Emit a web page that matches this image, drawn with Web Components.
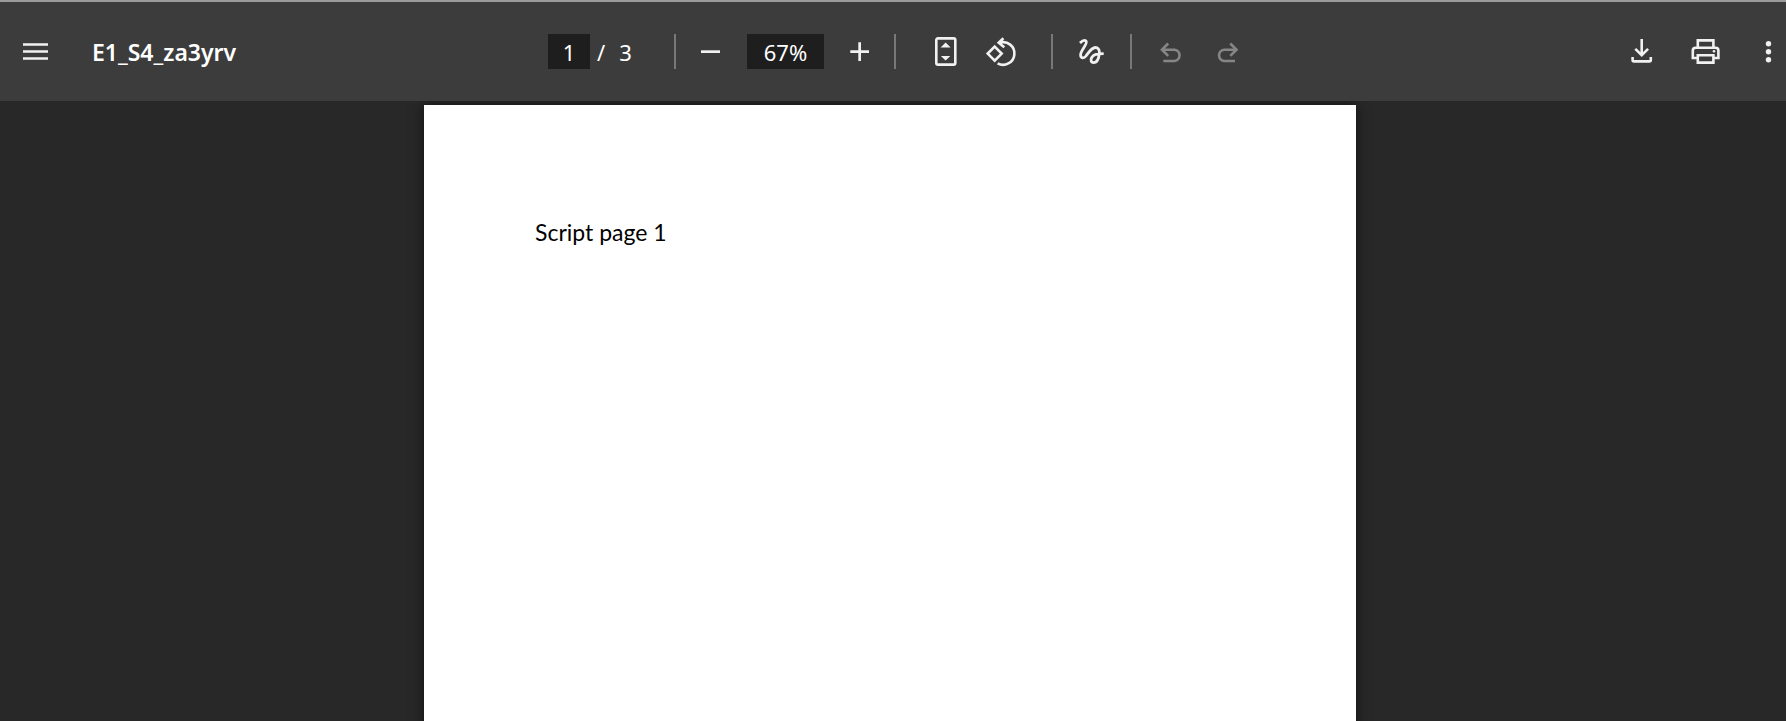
<!DOCTYPE html>
<html lang="en">
<head>
<meta charset="utf-8">
<title>E1_S4_za3yrv</title>
<style>
  html, body { height: 100%; margin: 0; overflow: hidden; background: #282828; }
  body { font-family: "Noto Sans", "Open Sans", sans-serif; }
</style>
</head>
<body>
<pdf-viewer>
  <pdf-toolbar slot="toolbar" doc-title="E1_S4_za3yrv" page="1" pages="3" zoom="67%"></pdf-toolbar>
  <pdf-page>Script page 1</pdf-page>
</pdf-viewer>

<script>
const ICONS = {
  menu: '<path class="solid" d="M3 9.300h25v2.400H3zM3 16.300h25v2.400H3zM3 23.300h25v2.400H3z"/>',
  minus: '<path class="solid" d="M6 16.300h19v2.700H6z"/>',
  plus: '<path class="solid" d="M6.300 16.300h18.700v2.700H6.300zM14.300 8.300h2.700v18.700h-2.700z"/>',
  fit: '<rect x="6.3" y="4.4" width="19" height="26.2" rx="1.6"/><path class="solid" d="M15.6 8.6l5 5h-10zM15.6 26.6l-4.7-4.7h9.4z"/>',
  rotate: '<path d="M9.7 12.6l7 7-7 7-7-7zM12.6 29.3A11.3 11.3 0 1 0 14.6 8.7M18.4 4.2l-4.7 4.5 5.6 4.6"/>',
  draw: '<path stroke-width="2.8" d="M4 9C6 7 8.5 5.6 10 7C12.500 9.500 4.500 16 4.600 21C4.700 24.500 8 24.600 10 22C13 18 15.500 13.500 19.500 13.500C22.500 13.500 23.800 16.500 23.300 20C22.700 24.500 21 28.600 17.600 28.600C14.800 28.600 14.600 25.600 15.600 23.600C17.500 20 21 19.700 27.700 19.700"/>',
  undo: '<path d="M8.300 27h11.300a5.700 5.700 0 0 0 0-11.300H7.500M13.200 9.500L7 15.700l6.200 6.200"/>',
  redo: '<path d="M24 27H13a5.700 5.700 0 0 1 0-11.300h12M19.300 9.500l6.200 6.200-6.200 6.200"/>',
  download: '<path d="M15.700 5v16.500M9.300 14.800l6.400 6.400 6.400-6.400M6.600 23v3q0 1.400 1.400 1.400h15.400q1.400 0 1.400-1.400v-3"/>',
  print: '<path d="M8.800 13.500V6.400h15.600v7.100M8.800 24H3.800V16.500q0-2.800 2.800-2.800h20q2.800 0 2.800 2.800V24h-5M8.800 21.300h15.600v7.300H8.800z"/><circle class="solid" cx="25" cy="17.200" r="1.300"/>',
  more: '<g class="solid"><circle cx="16.500" cy="9.700" r="2.700"/><circle cx="16.500" cy="17.700" r="2.700"/><circle cx="16.500" cy="25.700" r="2.700"/></g>'
};

class IconButton extends HTMLElement {
  connectedCallback() {
    const root = this.attachShadow({ mode: 'open' });
    root.innerHTML = `
      <style>
        :host { display: block; flex: none; }
        button { display: block; margin: 0; padding: 0; border: 0; background: none; color: #f1f1f1; cursor: pointer; }
        button:disabled { color: #868686; cursor: default; }
        svg { display: block; width: 32px; height: 35px; fill: none; stroke: currentColor; stroke-width: 2.6; }
        .solid { fill: currentColor; stroke: none; }
      </style>
      <button type="button" aria-label="${this.getAttribute('label')}" ${this.hasAttribute('disabled') ? 'disabled' : ''}>
        <svg viewBox="0 0 32 35" aria-hidden="true">${ICONS[this.getAttribute('icon')]}</svg>
      </button>`;
  }
}
customElements.define('icon-button', IconButton);

class ToolbarField extends HTMLElement {
  connectedCallback() {
    const root = this.attachShadow({ mode: 'open' });
    root.innerHTML = `
      <style>
        :host { display: block; flex: none; }
        input {
          display: block; box-sizing: border-box; width: 100%; height: 35px; margin: 0; padding: 0;
          border: 0; background: #1e1e1e; color: #fff; font: inherit; text-align: center; outline: none;
        }
      </style>
      <input type="text" aria-label="${this.getAttribute('label')}" value="${this.getAttribute('value')}">`;
  }
}
customElements.define('toolbar-field', ToolbarField);

class PdfToolbar extends HTMLElement {
  connectedCallback() {
    const attr = name => this.getAttribute(name);
    const root = this.attachShadow({ mode: 'open' });
    root.innerHTML = `
      <style>
        :host {
          display: grid; grid-template-columns: 1fr auto 1fr; align-items: center;
          box-sizing: border-box; height: 101px; padding: 0 2px 0 20px;
          border-top: 2px solid #9b9b9b; background: #3c3c3c; color: #fff;
          font-size: 22px; line-height: 32px;
        }
        div { display: flex; align-items: center; }
        .start { gap: 40px; }
        h1 { margin: 0; font-size: 23px; line-height: 32px; font-weight: 600; white-space: nowrap; }
        .center { margin-right: 13px; }
        .pages { width: 126px; }
        .pages toolbar-field { width: 42px; }
        .pages span { padding-left: 7px; }
        .pages span + span { padding-left: 14px; }
        .zoom { gap: 20px; padding: 0 18px 0 19px; }
        .zoom toolbar-field { width: 77px; }
        .view { gap: 23px; padding: 0 34px; }
        .annotate { padding: 0 22px 0 23px; }
        .history { gap: 24px; padding-left: 23px; }
        .end { justify-content: flex-end; gap: 31px; }
        i { width: 2px; height: 35px; background: #787878; }
      </style>
      <div class="start">
        <icon-button icon="menu" label="Menu"></icon-button>
        <h1>${attr('doc-title')}</h1>
      </div>
      <div class="center">
        <div class="pages">
          <toolbar-field label="Page number" value="${attr('page')}"></toolbar-field>
          <span>/</span><span>${attr('pages')}</span>
        </div>
        <i></i>
        <div class="zoom">
          <icon-button icon="minus" label="Zoom out"></icon-button>
          <toolbar-field label="Zoom level" value="${attr('zoom')}"></toolbar-field>
          <icon-button icon="plus" label="Zoom in"></icon-button>
        </div>
        <i></i>
        <div class="view">
          <icon-button icon="fit" label="Fit to page"></icon-button>
          <icon-button icon="rotate" label="Rotate counterclockwise"></icon-button>
        </div>
        <i></i>
        <div class="annotate"><icon-button icon="draw" label="Draw"></icon-button></div>
        <i></i>
        <div class="history">
          <icon-button icon="undo" label="Undo" disabled></icon-button>
          <icon-button icon="redo" label="Redo" disabled></icon-button>
        </div>
      </div>
      <div class="end">
        <icon-button icon="download" label="Download"></icon-button>
        <icon-button icon="print" label="Print"></icon-button>
        <icon-button icon="more" label="More actions"></icon-button>
      </div>`;
  }
}
customElements.define('pdf-toolbar', PdfToolbar);

class PdfPage extends HTMLElement {
  connectedCallback() {
    const root = this.attachShadow({ mode: 'open' });
    root.innerHTML = `
      <style>
        :host {
          display: block; box-sizing: border-box; width: 932px; max-width: 100%; min-height: 1206px;
          padding: 111px; background: #fff; color: #000; box-shadow: 0 0 12px rgba(0, 0, 0, .6);
          font-family: Lato, "Open Sans", sans-serif; font-size: 23px; line-height: 32px;
        }
        p { margin: 0; }
      </style>
      <p><slot></slot></p>`;
  }
}
customElements.define('pdf-page', PdfPage);

class PdfViewer extends HTMLElement {
  connectedCallback() {
    const root = this.attachShadow({ mode: 'open' });
    root.innerHTML = `
      <style>
        :host { display: flex; flex-direction: column; height: 100%; background: #282828; }
        main { flex: 1; min-height: 0; display: flex; justify-content: center; align-items: flex-start; padding: 4px 6px 0 0; overflow: hidden; }
      </style>
      <slot name="toolbar"></slot>
      <main><slot></slot></main>`;
  }
}
customElements.define('pdf-viewer', PdfViewer);
</script>
</body>
</html>
